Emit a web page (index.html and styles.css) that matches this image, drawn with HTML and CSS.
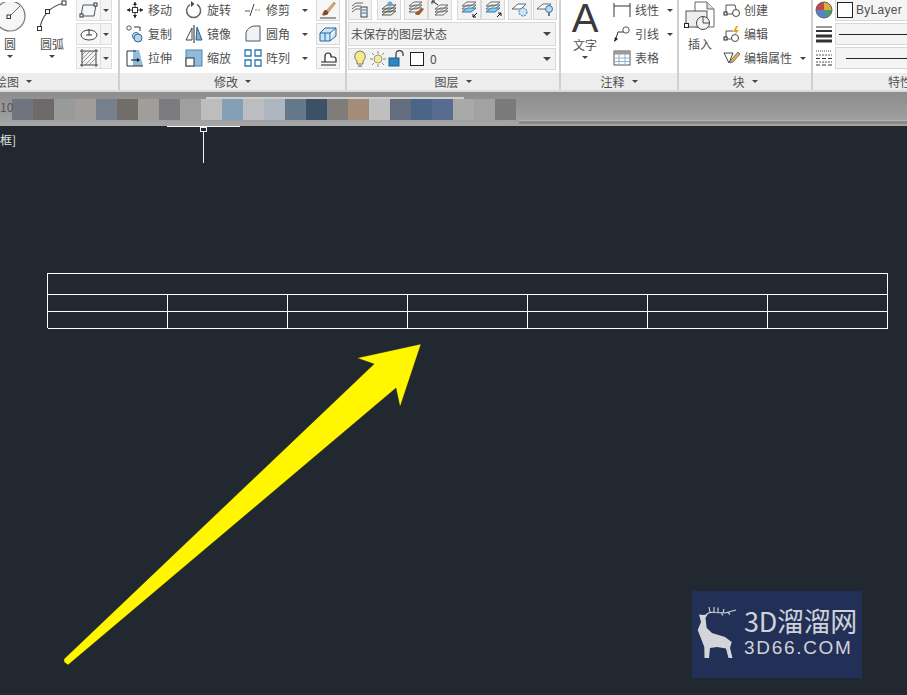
FILE: index.html
```html
<!DOCTYPE html>
<html lang="zh">
<head>
<meta charset="utf-8">
<title>CAD</title>
<link rel="stylesheet" href="styles.css">
</head>
<body>
<div class="app">
  <header class="ribbon">
    <section class="panel p-draw">
      <div class="body draw-body">
        <div class="big big-circle">
          <svg width="32" height="32" viewBox="0 0 32 32"><circle cx="14" cy="14" r="15" fill="#f6f6f6" stroke="#777" stroke-width="1.200"/><path d="M14 14 24 4" stroke="#666"/><rect x="11" y="13" width="3.500" height="3.500" fill="#fff" stroke="#333"/></svg>
          <span class="big-label">圆</span><i class="caret"></i>
        </div>
        <div class="big big-arc">
          <svg width="32" height="32" viewBox="0 0 32 32"><path d="M4 29C5 17 14 6 28 3" fill="none" stroke="#555" stroke-width="1.200"/><rect x="1.500" y="26.500" width="4" height="4" fill="#fff" stroke="#333"/><rect x="9.500" y="9.500" width="4" height="4" fill="#fff" stroke="#333"/><rect x="26" y="1" width="4" height="4" fill="#fff" stroke="#333"/></svg>
          <span class="big-label">圆弧</span><i class="caret"></i>
        </div>
        <div class="split-col">
          <div class="split"><span class="split-ic"><svg width="20" height="18" viewBox="0 0 20 18"><path d="M4 4H17L15 15H2Z" fill="#f4f7fa" stroke="#555"/><rect x="15" y="2" width="3" height="3" fill="#fff" stroke="#333"/><rect x="1" y="13" width="3" height="3" fill="#fff" stroke="#333"/></svg></span><span class="split-ar"><i class="caret"></i></span></div>
          <div class="split"><span class="split-ic"><svg width="20" height="18" viewBox="0 0 20 18"><ellipse cx="10" cy="10" rx="8" ry="5" fill="#fafafa" stroke="#444"/><path d="M10 4v6M7 10h6" stroke="#333"/></svg></span><span class="split-ar"><i class="caret"></i></span></div>
          <div class="split"><span class="split-ic"><svg width="20" height="20" viewBox="0 0 20 20"><rect x="3" y="3" width="14" height="14" fill="#f2f2f2"/><path d="M3 7 7 3M3 11 11 3M3 15 15 3M6 17 17 6M10 17l7-7" stroke="#999"/><path d="M1 3h18M1 17h18M3 1v18M17 1v18" stroke="#444"/></svg></span><span class="split-ar"><i class="caret"></i></span></div>
        </div>
      </div>
      <footer class="foot">绘图<i class="caret foot-caret"></i></footer>
    </section>

    <section class="panel p-modify">
      <div class="body modify-body">
        <div class="tool"><svg width="18" height="18" viewBox="0 0 18 18"><path d="M9 1v16M1 9h16" stroke="#333"/><path d="M9 1 7 4h4ZM9 17l-2-3h4ZM1 9l3-2v4ZM17 9l-3-2v4Z" fill="#222"/><rect x="6.500" y="6.500" width="5" height="5" fill="#fff" stroke="#333"/></svg><span>移动</span></div>
        <div class="tool"><svg width="18" height="18" viewBox="0 0 18 18"><path d="M12 3.500A7 7 0 1 1 5 3.600" fill="none" stroke="#666" stroke-width="1.500"/><path d="M6 0v6l3.500-3Z" fill="#444"/></svg><span>旋转</span></div>
        <div class="tool"><svg width="18" height="18" viewBox="0 0 18 18"><path d="M1 10h5" stroke="#2c5f8a"/><path d="M11 9h6" stroke="#888" stroke-dasharray="2 1"/><path d="M6 15 10 3" stroke="#444"/></svg><span>修剪</span><i class="caret"></i></div>
        <div class="sq"><svg width="18" height="18" viewBox="0 0 18 18"><path d="M7 10 15 1l1.500 1.500L9 12Z" fill="#d8a878" stroke="#9a6a3a" stroke-width=".500"/><path d="M6 9c2 0 4 2 3 4-1 1-4 2-6 1 1-1 1-4 3-5Z" fill="#8a4a1e"/><path d="M1 17h16" stroke="#444"/></svg></div>

        <div class="tool"><svg width="18" height="18" viewBox="0 0 18 18"><circle cx="3" cy="3" r="2.200" fill="#fff" stroke="#555"/><path d="M8 2h6v4" fill="none" stroke="#333"/><circle cx="10" cy="11" r="3.500" fill="#d8e8f4" stroke="#2c6a9c"/><circle cx="12" cy="13" r="4" fill="#b8d4e8" stroke="#2c6a9c"/></svg><span>复制</span></div>
        <div class="tool"><svg width="18" height="18" viewBox="0 0 18 18"><path d="M1 15 7 3v12Z" fill="#fff" stroke="#444"/><path d="M12 2 17 15H11Z" fill="#7ab0d8" stroke="#2c5f8a"/><path d="M9 0v18" stroke="#222"/></svg><span>镜像</span></div>
        <div class="tool"><svg width="18" height="18" viewBox="0 0 18 18"><path d="M2 16V9C2 5 6 1 11 1h5v15Z" fill="#eef3f7" stroke="#555"/></svg><span>圆角</span><i class="caret"></i></div>
        <div class="sq"><svg width="18" height="18" viewBox="0 0 18 18"><path d="M1 8h10v8H1ZM1 8l5-5h11l-6 5M11 16l6-5V3" fill="#cfe3f3" stroke="#1f6da8"/><path d="M6 8v8" stroke="#1f6da8"/></svg></div>

        <div class="tool"><svg width="18" height="18" viewBox="0 0 18 18"><path d="M7 1h6l4 16H7Z" fill="#8fbcdc"/><path d="M1 2h9M1 2v15h16" fill="none" stroke="#333"/><path d="M5 11h6" stroke="#111"/><path d="M11 9v4l3-2Z" fill="#111"/></svg><span>拉伸</span></div>
        <div class="tool"><svg width="18" height="18" viewBox="0 0 18 18"><rect x="1" y="1" width="16" height="16" fill="#8fbcdc" stroke="#4a88b4"/><rect x="1" y="9" width="8" height="8" fill="#fff" stroke="#333"/></svg><span>缩放</span></div>
        <div class="tool"><svg width="18" height="18" viewBox="0 0 18 18"><path d="M1 1h6v6H1ZM11 1h6v6h-6ZM1 11h6v6H1ZM11 11h6v6h-6Z" fill="#fff" stroke="#2a78b0" stroke-width="1.300"/></svg><span>阵列</span><i class="caret"></i></div>
        <div class="sq"><svg width="18" height="18" viewBox="0 0 18 18"><path d="M2 13h4V7a3 3 0 0 1 6 0v1h3a2 2 0 0 1 2 2v3H2ZM2 16h15" fill="#fff" stroke="#222" stroke-width="1.200"/></svg></div>
      </div>
      <footer class="foot">修改<i class="caret foot-caret"></i></footer>
    </section>

    <section class="panel p-layer">
      <div class="body layer-body">
        <div class="layer-top">
          <span class="lbtn"><svg width="18" height="18" viewBox="0 0 18 18"><path d="M1 6 5 3h7M1 9l4-3h5M1 12l4-3h4" fill="none" stroke="#666"/><rect x="10" y="7" width="6" height="10" fill="#e8eef4" stroke="#444"/><path d="M11 10h4M11 13h4" stroke="#2a78b0"/></svg></span>
          <span class="lbtn g5"><svg width="18" height="18" viewBox="0 0 18 18"><path d="M2 9l5-4h9l-5 4ZM2 12l5-4h9l-5 4ZM2 15l5-4h9l-5 4Z" fill="#eef2e0" stroke="#555"/><circle cx="10" cy="4" r="2.500" fill="#6aa4d4"/></svg></span>
          <span class="lbtn g3"><svg width="18" height="18" viewBox="0 0 18 18"><path d="M2 6l5-4h8l-5 4ZM2 9l5-4h8l-5 4ZM2 12l5-4h8l-5 4Z" fill="#fff" stroke="#666"/><path d="M8 14c1-3 3-2 4-3l3-3 2 1-3 4c-1 2-4 3-6 1Z" fill="#a85a22"/></svg></span>
          <span class="lbtn"><svg width="18" height="18" viewBox="0 0 18 18"><path d="M4 9l5-4h8l-5 4ZM4 12l5-4h8l-5 4ZM4 15l5-4h8l-5 4Z" fill="#fff" stroke="#666"/><path d="M1 1 7 5M1 1v3M1 1h3" stroke="#222" fill="none"/></svg></span>
          <span class="lbtn g5"><svg width="18" height="18" viewBox="0 0 18 18"><path d="M2 6l5-4h9l-5 4ZM2 9l5-4h9l-5 4Z" fill="#fff" stroke="#666"/><path d="M2 12l5-4h9l-5 4Z" fill="#8fc8e8" stroke="#2a78b0"/><path d="M17 13l-4 4M13 14v3h3" stroke="#111" fill="none"/></svg></span>
          <span class="lbtn"><svg width="18" height="18" viewBox="0 0 18 18"><path d="M2 6l5-4h9l-5 4ZM2 9l5-4h9l-5 4Z" fill="#fff" stroke="#666"/><path d="M2 12l5-4h9l-5 4Z" fill="#8fc8e8" stroke="#2a78b0"/><path d="M13 17l4-4M14 13h3v3" stroke="#111" fill="none"/></svg></span>
          <span class="lbtn g3"><svg width="18" height="18" viewBox="0 0 18 18"><path d="M1 9l6-5h8l-5 5Z" fill="#fff" stroke="#666"/><circle cx="12" cy="12" r="4" fill="#cfe3f3" stroke="#2a78b0" stroke-dasharray="2 1"/></svg></span>
          <span class="lbtn g1"><svg width="18" height="18" viewBox="0 0 18 18"><path d="M1 9l6-5h8l-5 5Z" fill="#fff" stroke="#666"/><circle cx="13" cy="9" r="3.500" fill="#bcd8ee" stroke="#2a78b0"/><path d="M12 13h2v3h-2Z" fill="#777"/></svg></span>
        </div>
        <div class="combo combo-state"><span>未保存的图层状态</span><i class="caret"></i></div>
        <div class="combo combo-layer">
          <svg width="16" height="18" viewBox="0 0 16 18"><path d="M8 1a5.500 5.500 0 0 0-3 10v3h6v-3A5.500 5.500 0 0 0 8 1Z" fill="#f7ec8a" stroke="#777"/><path d="M6 16h4" stroke="#555"/></svg>
          <svg width="18" height="18" viewBox="0 0 18 18"><circle cx="9" cy="9" r="4" fill="#f7ec8a" stroke="#999"/><path d="M9 1v3M9 14v3M1 9h3M14 9h3M3 3l2 2M13 13l2 2M15 3l-2 2M3 15l2-2" stroke="#888"/></svg>
          <svg width="18" height="18" viewBox="0 0 18 18"><rect x="1" y="8" width="10" height="8" fill="#2c88c4" stroke="#1c5f8c"/><path d="M8 8V4a3.500 3.500 0 0 1 7 0v2" fill="none" stroke="#444" stroke-width="1.300"/></svg>
          <span class="swatch"></span><span class="zero">0</span><i class="caret"></i>
        </div>
      </div>
      <footer class="foot">图层<i class="caret foot-caret"></i></footer>
    </section>

    <section class="panel p-note">
      <div class="body note-body">
        <div class="big big-text"><span class="a-glyph">A</span><span class="big-label">文字</span><i class="caret"></i></div>
        <div class="stack">
          <div class="tool"><svg width="18" height="18" viewBox="0 0 18 18"><path d="M1 2v14M17 2v14M1 5h16" stroke="#333"/></svg><span>线性</span><i class="caret"></i></div>
          <div class="tool"><svg width="18" height="18" viewBox="0 0 18 18"><path d="M2 16 5 7h6" fill="none" stroke="#333"/><path d="M1 17l1-5 3 2Z" fill="#222"/><circle cx="13" cy="5" r="3.200" fill="#fff" stroke="#555"/></svg><span>引线</span><i class="caret"></i></div>
          <div class="tool"><svg width="18" height="18" viewBox="0 0 18 18"><rect x="1" y="2" width="16" height="14" fill="#fff" stroke="#555"/><rect x="1" y="2" width="16" height="3.500" fill="#9a9a9a"/><path d="M1 9h16M1 12.500h16M6 5v11M12 5v11" stroke="#8fb4d0"/></svg><span>表格</span></div>
        </div>
      </div>
      <footer class="foot">注释<i class="caret foot-caret"></i></footer>
    </section>

    <section class="panel p-block">
      <div class="body block-body">
        <div class="big big-insert">
          <svg width="32" height="32" viewBox="0 0 32 32"><path d="M11 1h12l7 7v18H11Z" fill="#fff" stroke="#666"/><path d="M23 1v7h7" fill="#ddd" stroke="#666"/><rect x="2" y="10" width="21" height="16" fill="#eee" stroke="#555"/><circle cx="19" cy="22" r="6.500" fill="#f4f4f4" stroke="#444"/><path d="M19 15.500V22h6" fill="none" stroke="#444"/><rect x="0.500" y="22.500" width="4" height="4" fill="#fff" stroke="#222"/></svg>
          <span class="big-label">插入</span>
        </div>
        <div class="stack">
          <div class="tool"><svg width="18" height="18" viewBox="0 0 18 18"><path d="M3 4h9l1 4" fill="none" stroke="#555"/><path d="M3 4v9h7" fill="none" stroke="#555"/><circle cx="13" cy="12" r="3.500" fill="#fff" stroke="#444"/><rect x="1" y="11" width="3" height="3" fill="#fff" stroke="#222"/></svg><span>创建</span></div>
          <div class="tool"><svg width="18" height="18" viewBox="0 0 18 18"><path d="M3 6h7M3 6v8h6" fill="none" stroke="#555"/><circle cx="12" cy="13" r="3.500" fill="#fff" stroke="#444"/><path d="M13 1 10 7h3l-2 4 5-6h-3l2-4Z" fill="#e8a020"/><rect x="1" y="12" width="3" height="3" fill="#fff" stroke="#222"/></svg><span>编辑</span></div>
          <div class="tool"><svg width="18" height="18" viewBox="0 0 18 18"><path d="M1 4h9L6 14Z" fill="#fff" stroke="#444"/><path d="M8 11 15 3l2 2-7 8-3 1Z" fill="#e8b040" stroke="#777"/></svg><span>编辑属性</span><i class="caret"></i></div>
        </div>
      </div>
      <footer class="foot">块<i class="caret foot-caret"></i></footer>
    </section>

    <section class="panel p-prop">
      <div class="body prop-body">
        <div class="prop-row">
          <svg width="18" height="18" viewBox="0 0 18 18"><circle cx="9" cy="9" r="8" fill="#5a7fd0"/><path d="M9 9V1a8 8 0 0 1 8 8Z" fill="#d8b040"/><path d="M9 9H1a8 8 0 0 1 8-8Z" fill="#c04848"/><path d="M9 9h8a8 8 0 0 1-5 7Z" fill="#48a060"/><circle cx="9" cy="9" r="8" fill="none" stroke="#666"/></svg>
          <div class="pbox"><span class="swatch swatch-lg"></span><span class="bylayer">ByLayer</span></div>
        </div>
        <div class="prop-row">
          <svg width="18" height="18" viewBox="0 0 18 18"><path d="M1 2h16" stroke="#333"/><path d="M1 6h16" stroke="#333" stroke-width="2"/><path d="M1 11h16" stroke="#333" stroke-width="3"/><path d="M1 16h16" stroke="#333" stroke-width="3"/></svg>
          <div class="pbox"><span class="pline"></span></div>
        </div>
        <div class="prop-row">
          <svg width="18" height="18" viewBox="0 0 18 18"><path d="M1 2h16" stroke="#555" stroke-dasharray="1 1"/><path d="M1 6h16M1 13h16" stroke="#555" stroke-dasharray="2 1"/><path d="M1 9.500h16M1 16h16" stroke="#333" stroke-dasharray="4 2"/></svg>
          <div class="pbox pbox-in"><span class="pline"></span></div>
        </div>
      </div>
      <footer class="foot foot-prop">特性</footer>
    </section>
  </header>

  <div class="band">
    <span class="band-num">10</span>
    <i class="band-tab"></i>
    <div class="mosaic">
      <i style="background:#70747f"></i><i style="background:#6d6a69"></i><i style="background:#999b9a"></i><i style="background:#a09d9b"></i><i style="background:#76808d"></i><i style="background:#716d69"></i><i style="background:#a19e9a"></i><i style="background:#7b7b7d"></i><i style="background:#a09f9e"></i><i style="background:#bdbdbd"></i><i style="background:#84a0b4"></i><i style="background:#bcbdc0"></i><i style="background:#adb5be"></i><i style="background:#64788a"></i><i style="background:#3c5165"></i><i style="background:#7f7c7a"></i><i style="background:#a38d78"></i><i style="background:#bfbfbf"></i><i style="background:#646d80"></i><i style="background:#4a6586"></i><i style="background:#586c8f"></i><i style="background:#a9a9a9"></i><i style="background:#a2a2a2"></i><i style="background:#7a7a7a"></i>
    </div>
    <div class="band-strip"></div>
  </div>

  <main class="canvas">
    <span class="vp-label">框]</span>
    <div class="cursor"><i class="cursor-h"></i><i class="cursor-box"></i><i class="cursor-v"></i></div>
    <div class="dwg-table">
      <div class="c title"></div>
      <div class="c"></div><div class="c"></div><div class="c"></div><div class="c"></div><div class="c"></div><div class="c"></div><div class="c"></div>
      <div class="c"></div><div class="c"></div><div class="c"></div><div class="c"></div><div class="c"></div><div class="c"></div><div class="c"></div>
    </div>
    <svg class="arrow" width="907" height="569" viewBox="0 126 907 569"><polygon points="421,344 357,358 374,364 64,659 64,662 68,665 396,388 400,407" fill="#fff600" stroke="#14161a" stroke-opacity=".5" stroke-width=".8"/></svg>
    <div class="mark">
      <svg class="deer" width="50" height="60" viewBox="0 0 50 60"><path d="M4 9.500 8 10 12.700 9.300 10.500 13 11.700 23 17 28 30 32 36.700 37 35 43 37.500 53H33.500L31 43.500 22 42 15 43 14 53H9.500L9.300 42 2.700 25 6 17 5 13Z" fill="#d3d5d8"/><path d="M11 10C13 7 17 7 20 7.500L30 8 41 5M15 7 14 2M19 7 19 2M23 8 23 2.500M28 8 29 4M26 8 28 10.500M33 7.500 35 9.500" fill="none" stroke="#d3d5d8" stroke-width="1.100"/></svg>
      <div class="mark-text"><span class="mark-cn">3D溜溜网</span><span class="mark-en">3D66.COM</span></div>
    </div>
  </main>
</div>
</body>
</html>
```

FILE: styles.css
```css
* { box-sizing: border-box; }
html, body { margin: 0; height: 100%; }
body { overflow: hidden; background: #212830; font-family: "Noto Sans CJK SC", "Liberation Sans", sans-serif; }
.app { width: 907px; height: 695px; display: flex; flex-direction: column; overflow: hidden; }

.ribbon { height: 92px; flex: none; display: flex; background: #cfcfcf; overflow: hidden; border-bottom: 2px solid #dadada; }
.panel { display: flex; flex-direction: column; flex: none; background: #fff; margin-right: 2px; }
.p-draw { width: 118px; }
.p-modify { width: 225px; }
.p-layer { width: 212px; }
.p-note { width: 116px; }
.p-block { width: 132px; }
.p-prop { width: 100px; margin-right: 0; }
.body { height: 73px; flex: none; }
.foot { height: 17px; flex: none; background: #ededed; color: #505050; font-size: 12px; line-height: 17px; display: flex; align-items: center; justify-content: center; gap: 7px; }
.foot-caret { border-top-color: #444; border-width: 4px 4px 0; }
.foot-prop { justify-content: flex-start; padding-left: 75px; }
.p-draw .foot { justify-content: flex-start; margin-left: -5px; }

.caret { display: inline-block; width: 0; height: 0; border-style: solid; border-width: 3px 3px 0; border-color: #444 transparent transparent; flex: none; }

.big { display: flex; flex-direction: column; align-items: center; flex: none; }
.big-label { font-size: 12px; line-height: 16px; color: #505050; }
.big .caret { margin-top: 3px; }

.draw-body { display: flex; }
.big-circle { width: 36px; margin-left: -6px; margin-right: 4px; }
.big-circle svg { margin-top: 2px; flex: none; }
.big-circle .big-label { margin-top: 2px; margin-left: -4px; }
.big-circle .caret { margin-left: -4px; }
.big-arc { width: 32px; margin-left: 2px; }
.big-arc svg { margin-bottom: 4px; }
.big-arc .big-label { white-space: nowrap; }
.split-col { display: flex; flex-direction: column; gap: 2px; margin: -1px 0 0 8px; }
.split { width: 36px; height: 22px; display: flex; border: 1px solid #dedede; background: #f4f4f4; }
.split-ic { width: 24px; display: flex; align-items: center; justify-content: center; border-right: 1px solid #dedede; background: #f7f7f7; }
.split-ar { flex: 1; display: flex; align-items: center; justify-content: center; }

.modify-body { display: grid; grid-template-columns: 59px 59px 72px 24px; grid-auto-rows: 24px; margin-top: -2px; padding-left: 6px; height: 75px; }
.tool { display: flex; align-items: center; gap: 4px; font-size: 12px; color: #505050; white-space: nowrap; }
.tool svg { flex: none; }
.tool span { margin-bottom: 2px; }
.tool .caret { margin-left: 8px; }
.sq { width: 24px; height: 22px; margin-top: 1px; border: 1px solid #d8d8d8; background: #f6f6f6; display: flex; align-items: center; justify-content: center; }

.layer-body { display: flex; flex-direction: column; padding-left: 1px; margin-top: -2px; height: 75px; }
.layer-top { display: flex; height: 22px; align-items: flex-start; }
.lbtn { width: 24px; height: 22px; border: 1px solid #d8d8d8; background: #f2f2f2; display: flex; align-items: center; justify-content: center; flex: none; }
.g5 { margin-left: 5px; }
.g3 { margin-left: 3px; }
.g1 { margin-left: 1px; }
.combo { width: 208px; height: 24px; margin-top: 2px; border: 1px solid #d8d8d8; background: #f2f2f2; display: flex; align-items: center; font-size: 12px; color: #505050; padding: 0 4px 0 2px; }
.combo .caret { margin-left: auto; border-width: 4px 4px 0; }
.combo > span:not(.swatch) { margin-bottom: 2px; }
.combo-layer { height: 22px; gap: 1px; padding-left: 3px; }
.swatch { display: block; width: 14px; height: 14px; background: #fff; border: 1px solid #222; flex: none; margin-left: 3px; }
.zero { margin-left: 5px; }

.note-body { display: flex; }
.big-text { width: 48px; }
.a-glyph { font-family: "Liberation Sans", sans-serif; font-size: 40px; line-height: 38px; color: #3a3a3a; margin-top: -1px; }
.stack { display: flex; flex-direction: column; margin-top: -2px; margin-left: 4px; }
.stack .tool { height: 24px; }
.note-body .tool .caret { margin-left: 4px; }

.block-body { display: flex; padding-left: 5px; }
.big-insert { width: 32px; margin-right: 3px; margin-top: 1px; }
.big-insert .big-label { margin-top: 3px; }
.block-body .tool { gap: 3px; }
.block-body .tool .caret { margin-left: 5px; }

.prop-body { display: flex; flex-direction: column; padding-left: 2px; margin-top: -2px; height: 75px; }
.prop-row { height: 24px; display: flex; align-items: center; gap: 2px; flex: none; }
.pbox { flex: 1; height: 22px; border: 1px solid #d8d8d8; background: #f4f4f4; display: flex; align-items: center; padding-left: 1px; overflow: hidden; margin-right: -6px; }
.pbox-in { padding-left: 8px; }
.swatch-lg { width: 16px; height: 16px; margin-left: 0; }
.bylayer { margin-left: 3px; font-family: "Liberation Sans", sans-serif; font-size: 12px; color: #505050; letter-spacing: .3px; }
.pline { display: block; width: 100%; height: 1px; background: #222; margin-left: 2px; }

.band { height: 34px; flex: none; background: linear-gradient(#8d8d8d, #9a9a9a 60%, #a6a6a6); display: flex; position: relative; padding: 7px 0 0 12px; }
.band-num { position: absolute; left: 0; top: 6px; font-size: 12px; color: #555; }
.band-tab { position: absolute; left: 206px; top: 5px; width: 258px; height: 2px; background: #cfcfcf; }
.mosaic { display: flex; height: 21px; }
.mosaic i { display: block; width: 21px; height: 21px; flex: none; }
.band-strip { position: absolute; left: 519px; right: 0; top: 28px; height: 4px; background: #8a8a8a; border-top: 1px solid #b4b4b4; }

.canvas { flex: 1; position: relative; background: #212830; overflow: hidden; }
.vp-label { position: absolute; left: 0; top: 5px; font-size: 12px; line-height: 17px; color: #e4e4e4; }
.cursor-h { position: absolute; left: 167px; top: 0; width: 73px; height: 1px; background: #f2f2f2; }
.cursor-box { position: absolute; left: 200px; top: 1px; width: 7px; height: 5px; border: 1px solid #f2f2f2; }
.cursor-v { position: absolute; left: 203px; top: 6px; width: 1px; height: 31px; background: #f2f2f2; }

.dwg-table { position: absolute; left: 47px; top: 147px; width: 841px; height: 55px; display: grid; grid-template-columns: repeat(7, 1fr); grid-template-rows: 21px 17px 17px; border-top: 1px solid #fff; border-left: 1px solid #fff; }
.c { border-right: 1px solid #fff; border-bottom: 1px solid #fff; }
.title { grid-column: 1 / -1; }

.arrow { position: absolute; left: 0; top: 0; }

.mark { position: absolute; left: 692px; top: 465px; width: 170px; height: 87px; background: #223058; display: flex; align-items: center; padding-left: 3px; color: #cfd2d8; }
.deer { flex: none; }
.mark-text { display: flex; flex-direction: column; gap: 2px; margin-top: -6px; margin-left: -1px; }
.mark-cn { font-size: 27px; line-height: 30px; letter-spacing: -.3px; white-space: nowrap; }
.mark-en { font-family: "Liberation Sans", sans-serif; font-size: 19px; line-height: 20px; letter-spacing: 1.700px; white-space: nowrap; }
```
